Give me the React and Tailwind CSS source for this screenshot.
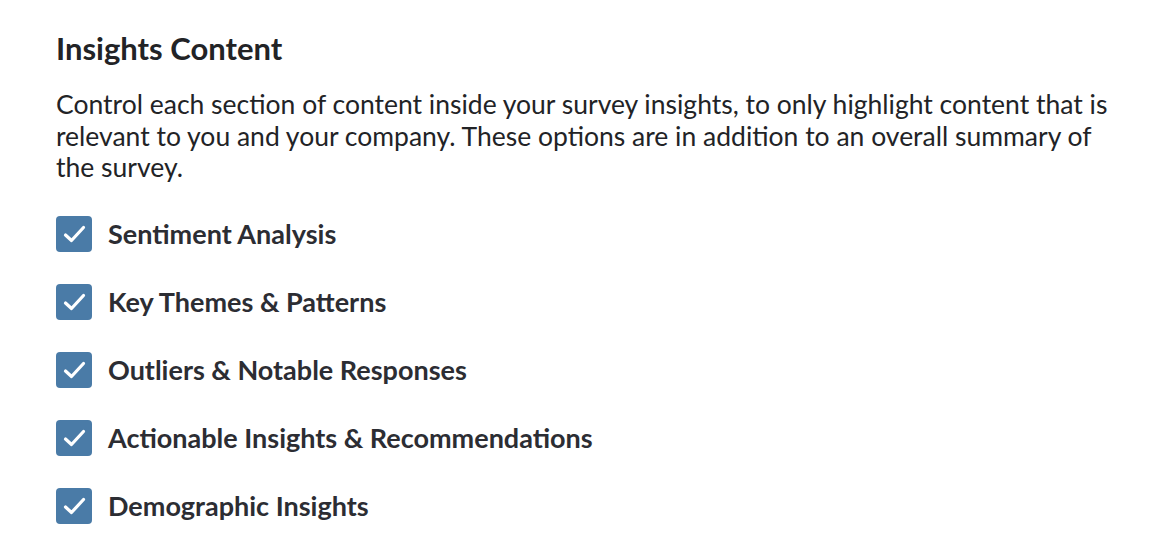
import React from "react";

const options = [
  "Sentiment Analysis",
  "Key Themes & Patterns",
  "Outliers & Notable Responses",
  "Actionable Insights & Recommendations",
  "Demographic Insights",
];

const CheckIcon = () => (
  <svg width="36" height="36" viewBox="0 0 36 36" fill="none">
    <path
      d="M9.5 19 L15.5 24.5 L27.5 11.5"
      stroke="white"
      strokeWidth="3.2"
      strokeLinecap="round"
      strokeLinejoin="round"
    />
  </svg>
);

const App = () => {
  return (
    <div
      className="min-h-screen bg-white px-[56px] pt-[30px] text-[#24252b]"
      style={{ fontFamily: "Lato, 'Noto Sans', sans-serif" }}
    >
      <h2 className="text-[31px] font-bold leading-[36px] text-[#222326]">
        Insights Content
      </h2>
      <p className="mt-[23px] w-[1065px] text-[26.5px] leading-[31.5px] text-[#222326]">
        Control each section of content inside your survey insights, to only
        highlight content that is relevant to you and your company. These
        options are in addition to an overall summary of the survey.
      </p>
      <div className="mt-[32px] flex flex-col gap-[32px]">
        {options.map((label) => (
          <label key={label} className="flex items-center gap-[16px]">
            <span className="flex h-[36px] w-[36px] items-center justify-center rounded-[4px] bg-[#4a7ba7]">
              <CheckIcon />
            </span>
            <span className="text-[27px] font-bold leading-[36px] text-[#2c2d33]">
              {label}
            </span>
          </label>
        ))}
      </div>
    </div>
  );
};

export default App;
